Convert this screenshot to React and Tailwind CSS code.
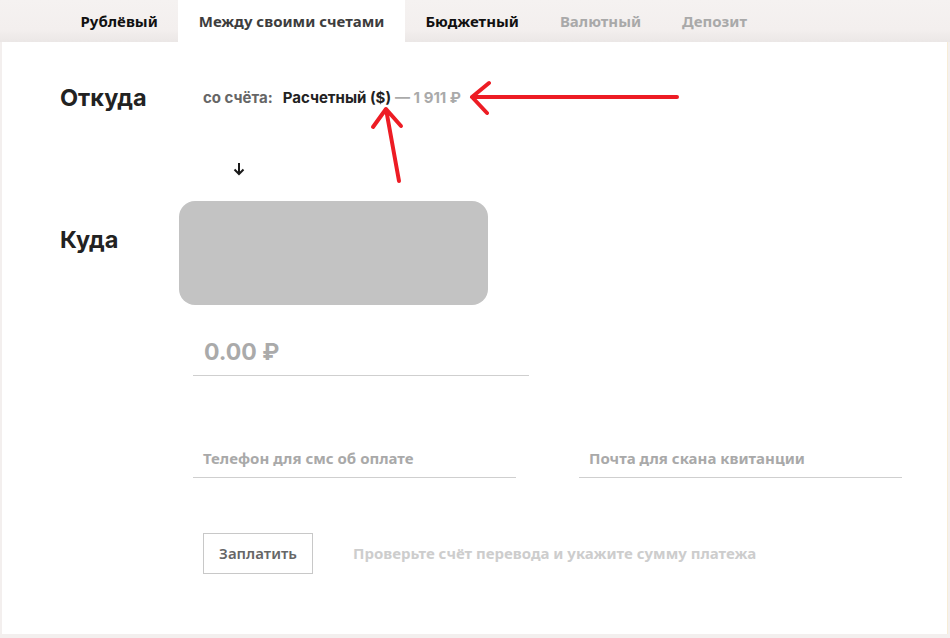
export default function App() {
  const ui = { fontFamily: '"Noto Sans", "Open Sans", sans-serif' };
  const head = { fontFamily: 'Inter, "Noto Sans", sans-serif' };
  return (
    <div className="relative w-[950px] h-[638px] bg-[#f3efee] flex flex-col overflow-hidden" style={ui}>
      {/* tabs */}
      <div className="h-[42px] flex pl-[60px] shrink-0 bg-[linear-gradient(to_bottom,#f5f2f1_0%,#f3efee_70%,#ebe7e6_100%)]">
        <div className="px-[20.5px] flex items-center text-[15px] font-bold text-[#111]">Рублёвый</div>
        <div className="px-[20.5px] flex items-center text-[15px] font-bold text-[#3d3d3d] bg-white">Между своими счетами</div>
        <div className="px-[20.5px] flex items-center text-[15px] font-bold text-[#111]">Бюджетный</div>
        <div className="px-[20.5px] flex items-center text-[15px] font-bold text-[#a9a9a9]">Валютный</div>
        <div className="px-[20.5px] flex items-center text-[15px] font-bold text-[#a9a9a9]">Депозит</div>
      </div>
      {/* content */}
      <div className="flex-1 ml-[2px] mr-[2px] mb-[4px] bg-white border-r border-[#f7ecd6]">
        <div className="pl-[58px] pt-[42px]">
          {/* from */}
          <div className="flex items-center h-[28px]">
            <div className="w-[119px] text-[23.5px] font-bold text-[#222]" style={head}>Откуда</div>
            <div className="pl-[24px] flex items-center text-[15px] font-bold" style={head}>
              <span className="text-[#666] mr-[10px]">со счёта:</span>
              <span className="text-[#222]">Расчетный ($)</span>
              <span className="text-[#aaa] ml-[4px]">— 1 911 ₽</span>
            </div>
          </div>
          {/* arrow */}
          <div className="mt-[49px] h-[16px] pl-[173px] flex items-center">
            <svg width="12" height="14" viewBox="0 0 12 14">
              <g stroke="#1a1a1a" strokeWidth="2" fill="none" strokeLinecap="butt" strokeLinejoin="miter">
                <path d="M6 1 L6 12" />
                <path d="M1.5 7.5 L6 12 L10.5 7.5" />
              </g>
            </svg>
          </div>
          {/* to */}
          <div className="flex items-start mt-[24px]">
            <div className="w-[119px] pt-[25px] h-[28px] leading-[28px] text-[23.5px] font-bold text-[#222] box-content" style={head}>Куда</div>
            <div className="w-[309px] h-[104px] rounded-[16px] bg-[#c3c3c3]"></div>
          </div>
          {/* amount */}
          <div className="ml-[133px] mt-[33px] w-[336px] pl-[11px] pb-[9px] border-b border-[#cfcfcf]">
            <div className="h-[28px] leading-[28px] text-[23px] font-bold text-[#aaa]" style={head}>0.00 ₽</div>
          </div>
          {/* contacts */}
          <div className="ml-[133px] mt-[72px] flex gap-[63px]">
            <div className="w-[323px] pl-[10px] pb-[9px] border-b border-[#cfcfcf] h-[30px] leading-[20px] text-[15px] font-bold text-[#a9a9a9]">Телефон для смс об оплате</div>
            <div className="w-[323px] pl-[10px] pb-[9px] border-b border-[#cfcfcf] h-[30px] leading-[20px] text-[15px] font-bold text-[#a9a9a9]">Почта для скана квитанции</div>
          </div>
          {/* pay */}
          <div className="ml-[143px] mt-[55px] flex items-center gap-[40px]">
            <div className="w-[110px] h-[41px] border border-[#c8c8c8] flex items-center justify-center text-[15px] font-semibold text-[#666]">Заплатить</div>
            <div className="text-[15px] font-bold text-[#cdcdcd]">Проверьте счёт перевода и укажите сумму платежа</div>
          </div>
        </div>
      </div>
      {/* annotation arrows */}
      <svg className="absolute left-0 top-0 pointer-events-none" width="950" height="638" viewBox="0 0 950 638">
        <g stroke="#ed1c24" strokeWidth="4" strokeLinecap="round" strokeLinejoin="round" fill="none">
          <path d="M677 97 L472 97 M489 83 L472 97 L487 113" />
          <path d="M399 181 L386 109 M373 127 L386 109 L401 126" />
        </g>
      </svg>
    </div>
  );
}
